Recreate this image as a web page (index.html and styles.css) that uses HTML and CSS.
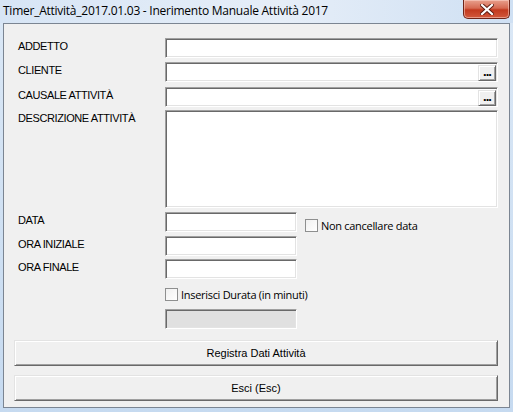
FILE: index.html
```html
<!DOCTYPE html>
<html lang="it">
<head>
    <meta charset="UTF-8">
    <title>Inerimento Manuale Attività 2017</title>
    <link rel="stylesheet" href="styles.css">
</head>
<body>
    <div class="window">
        <div class="titlebar">
            <span class="title">Timer_Attività_2017.01.03 - Inerimento Manuale Attività 2017</span>
            <span class="close">
                <svg width="14" height="11" viewBox="0 0 14 11">
                    <path d="M2 1 L12 10 M12 1 L2 10" stroke="#5a1a10" stroke-width="4" stroke-linecap="square"/>
                    <path d="M2 1 L12 10 M12 1 L2 10" stroke="#fff" stroke-width="2.2" stroke-linecap="square"/>
                </svg>
            </span>
        </div>

        <form class="client">
            <div class="row r-addetto">
                <label class="lbl">ADDETTO</label>
                <div class="box wide"></div>
            </div>
            <div class="row r-cliente">
                <label class="lbl">CLIENTE</label>
                <div class="box wide"><span class="dots">...</span></div>
            </div>
            <div class="row r-causale">
                <label class="lbl">CAUSALE ATTIVITÀ</label>
                <div class="box wide"><span class="dots">...</span></div>
            </div>
            <div class="row r-descr">
                <label class="lbl">DESCRIZIONE ATTIVITÀ</label>
                <div class="box wide tall"></div>
            </div>
            <div class="row r-data">
                <label class="lbl">DATA</label>
                <div class="box short"></div>
                <div class="check check-data"><span class="tick"></span>Non cancellare data</div>
            </div>
            <div class="row r-ini">
                <label class="lbl">ORA INIZIALE</label>
                <div class="box short"></div>
            </div>
            <div class="row r-fin">
                <label class="lbl">ORA FINALE</label>
                <div class="box short"></div>
            </div>
            <div class="row r-durata">
                <span class="lbl"></span>
                <div class="check"><span class="tick"></span>Inserisci Durata (in minuti)</div>
            </div>
            <div class="row r-minuti">
                <span class="lbl"></span>
                <div class="box short disabled"></div>
            </div>

            <div class="btn btn-reg">Registra Dati Attività</div>
            <div class="btn btn-esc">Esci (Esc)</div>
        </form>
    </div>
</body>
</html>
```

FILE: styles.css
```css
body {
    margin: 0;
    background-color: #c9dcf2;
    font-family: "Liberation Sans", Arial, sans-serif;
}

.window {
    width: 513px;
    height: 412px;
    background: linear-gradient(to bottom, #dbe8f6, #c6daf0);
    overflow: hidden;
}

/* barra del titolo */
.titlebar {
    height: 23px;
    display: flex;
    align-items: flex-start;
    justify-content: space-between;
    background: linear-gradient(to right, #d7e5f5 0%, #e6eef8 55%, #cfe0f3 100%);
}

.title {
    font-family: "Open Sans", "Noto Sans", sans-serif;
    font-size: 12px;
    letter-spacing: -0.25px;
    color: #000;
    padding: 3px 0 0 3px;
    line-height: 15px;
}

.close {
    width: 45px;
    height: 18px;
    margin-right: 3px;
    display: flex;
    align-items: center;
    justify-content: center;
    border: 1px solid #6e2418;
    border-top: none;
    border-radius: 0 0 5px 5px;
    background: linear-gradient(to bottom, #e8a08d 0%, #d66a52 45%, #c2391e 55%, #d2583c 100%);
    box-shadow: inset 0 0 0 1px rgba(255, 220, 210, 0.5);
}

/* area interna */
.client {
    margin: 0 3px;
    height: 385px;
    box-sizing: border-box;
    background-color: #f0f0f0;
    border: 1px solid #7b8592;
    padding: 14px 11px 0 10px;
    display: flex;
    flex-direction: column;
}

.row {
    display: flex;
    align-items: flex-start;
}

.lbl {
    width: 151px;
    flex: none;
    font-size: 11px;
    letter-spacing: -0.4px;
    color: #000;
    padding: 2px 0 0 4px;
    box-sizing: border-box;
}

.box {
    height: 20px;
    box-sizing: border-box;
    background-color: #fff;
    border-top: 1px solid #a0a0a0;
    border-left: 1px solid #a0a0a0;
    border-right: 1px solid #fff;
    border-bottom: 1px solid #fff;
    box-shadow: inset 1px 1px 0 #696969, inset -1px -1px 0 #e3e3e3;
    position: relative;
}

.wide { width: 335px; }
.short { width: 132px; }
.tall { height: 98px; }
.disabled { background-color: #e0e0e0; }

.dots {
    position: absolute;
    right: 1px;
    top: 2px;
    width: 18px;
    height: 16px;
    box-sizing: border-box;
    background-color: #f0f0f0;
    border-top: 1px solid #e3e3e3;
    border-left: 1px solid #e3e3e3;
    border-right: 1px solid #696969;
    border-bottom: 1px solid #696969;
    box-shadow: inset 1px 1px 0 #fff, inset -1px -1px 0 #a0a0a0;
    font-size: 13px;
    font-weight: bold;
    line-height: 11px;
    text-align: center;
    letter-spacing: -1px;
}

.r-addetto { margin-top: 0; }
.r-cliente { margin-top: 4px; }
.r-causale { margin-top: 5px; }
.r-descr { margin-top: 3px; }
.r-data { margin-top: 4px; }
.r-ini { margin-top: 4px; }
.r-fin { margin-top: 3px; }
.r-durata { margin-top: 9px; }
.r-minuti { margin-top: 8px; }

/* caselle di controllo */
.check {
    display: flex;
    align-items: center;
    font-family: "Open Sans", "Noto Sans", sans-serif;
    font-size: 11px;
    letter-spacing: -0.3px;
    color: #000;
    height: 13px;
}

.check-data {
    margin: 7px 0 0 8px;
}

.tick {
    width: 13px;
    height: 13px;
    box-sizing: border-box;
    border: 1px solid #8e8f8f;
    background: linear-gradient(135deg, #f0f0f0, #ffffff);
    margin-right: 3px;
    flex: none;
}

/* pulsanti */
.btn {
    width: 484px;
    height: 26px;
    box-sizing: border-box;
    background-color: #f0f0f0;
    border-top: 1px solid #e3e3e3;
    border-left: 1px solid #e3e3e3;
    border-right: 1px solid #696969;
    border-bottom: 1px solid #696969;
    box-shadow: inset 1px 1px 0 #fff, inset -1px -1px 0 #a0a0a0;
    font-size: 11px;
    text-align: center;
    line-height: 24px;
    color: #000;
}

.btn-reg { margin-top: 11px; }
.btn-esc { margin-top: 9px; }
```
